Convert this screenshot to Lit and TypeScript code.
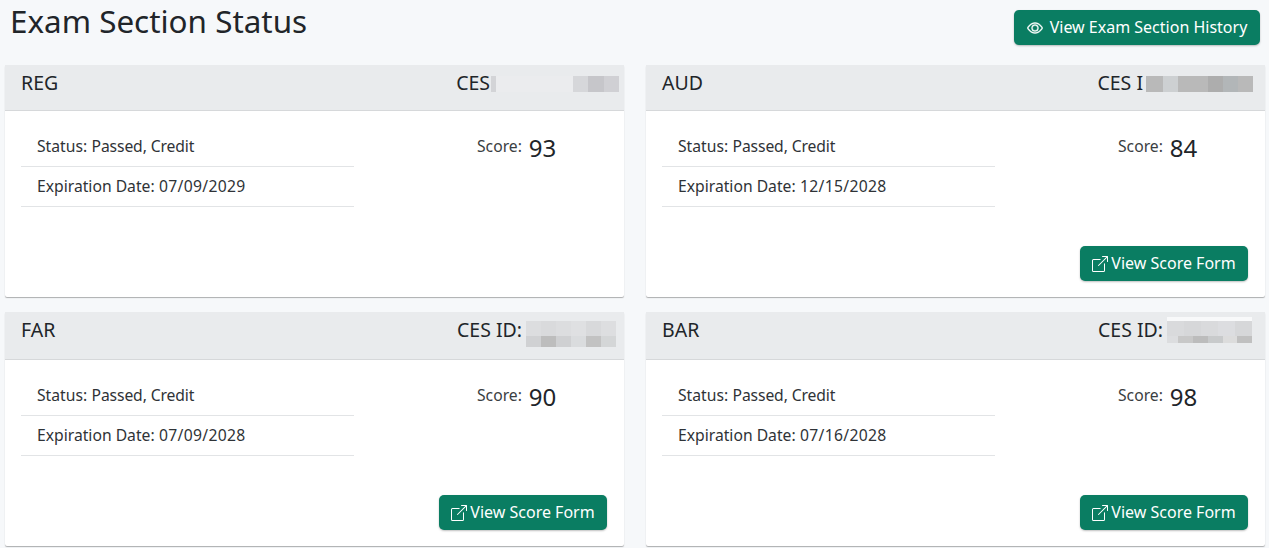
import { LitElement, html, css, svg } from "lit";
import { customElement } from "lit/decorators.js";

type Row = { h: number; cells: [number, string][] };
type Card = {
  name: string; label: string; status: string; date: string; score: string; button: boolean;
  top: number; bottom: number; right: number; gap: number; mosaic: Row[];
};

const cards: Card[] = [
  { name: "REG", label: "CES", status: "Passed, Credit", date: "07/09/2029", score: "93", button: false, top: 11, bottom: 18, right: 0, gap: 1,
    mosaic: [{ h: 16, cells: [[5, "#d3d4d7"], [77, "#ebecee"], [15, "#d6d7da"], [16, "#c6c6ca"], [15, "#d0d0d4"]] }] },
  { name: "AUD", label: "CES I", status: "Passed, Credit", date: "12/15/2028", score: "84", button: true, top: 11, bottom: 18, right: 7, gap: 3,
    mosaic: [{ h: 16, cells: [[17, "#b9b9b9"], [15, "#cdd0d2"], [30, "#b9b9b9"], [15, "#adadad"], [15, "#b2b6b8"], [15, "#b9b9b9"]] }] },
  { name: "FAR", label: "CES ID:", status: "Passed, Credit", date: "07/09/2028", score: "90", button: true, top: 9, bottom: 12, right: 3, gap: 4,
    mosaic: [
      { h: 15, cells: [[15, "#dcdddf"], [15, "#d9dadc"], [15, "#dcdddf"], [15, "#dfe0e2"], [15, "#d8d9db"], [15, "#dddee0"]] },
      { h: 11, cells: [[15, "#d0d1d3"], [15, "#bdbdbd"], [15, "#cfd0d2"], [15, "#dadcde"], [15, "#c2c2c2"], [15, "#d4d6d7"]] },
    ] },
  { name: "BAR", label: "CES ID:", status: "Passed, Credit", date: "07/16/2028", score: "98", button: true, top: 5, bottom: 16, right: 8, gap: 4,
    mosaic: [
      { h: 4, cells: [[85, "#f8f9fa"]] },
      { h: 15, cells: [[17, "#d9dadc"], [17, "#d6d7d9"], [17, "#d9dadc"], [17, "#dcdde0"], [17, "#d6d7d9"]] },
      { h: 7, cells: [[11, "#dcdddf"], [15, "#c8c8c8"], [15, "#bcbcbc"], [15, "#c8cacb"], [14, "#dcdcdc"], [15, "#c0c0c0"]] },
    ] },
];

const eye = svg`<path d="M16 8s-3-5.5-8-5.5S0 8 0 8s3 5.5 8 5.5S16 8 16 8zM1.173 8a13.133 13.133 0 0 1 1.66-2.043C4.12 4.668 5.88 3.5 8 3.5c2.12 0 3.879 1.168 5.168 2.457A13.133 13.133 0 0 1 14.828 8c-.058.087-.122.183-.195.288-.335.48-.83 1.12-1.465 1.755C11.879 11.332 10.119 12.5 8 12.5c-2.12 0-3.879-1.168-5.168-2.457A13.134 13.134 0 0 1 1.172 8z"/><path d="M8 5.5a2.5 2.5 0 1 0 0 5 2.5 2.5 0 0 0 0-5zM4.5 8a3.5 3.5 0 1 1 7 0 3.5 3.5 0 0 1-7 0z"/>`;
const ext = svg`<path d="M8.636 3.5a.5.5 0 0 0-.5-.5H1.5A1.5 1.5 0 0 0 0 4.5v10A1.5 1.5 0 0 0 1.5 16h10a1.5 1.5 0 0 0 1.5-1.5V7.864a.5.5 0 0 0-1 0V14.5a.5.5 0 0 1-.5.5h-10a.5.5 0 0 1-.5-.5v-10a.5.5 0 0 1 .5-.5h6.636a.5.5 0 0 0 .5-.5z"/><path d="M16 .5a.5.5 0 0 0-.5-.5h-5a.5.5 0 0 0 0 1h3.793L6.146 9.146a.5.5 0 1 0 .708.708L15 1.707V5.5a.5.5 0 0 0 1 0v-5z"/>`;

@customElement("app-root")
export class AppRoot extends LitElement {
  static styles = css`
    :host { display: block; width: 1269px; height: 548px; overflow: hidden; background: #f6f8fa; color: #212529;
      font-family: "Noto Sans", "Open Sans", sans-serif; }
    .top { display: flex; justify-content: space-between; align-items: flex-start; height: 65px; padding: 0 9px 0 10px; box-sizing: border-box; }
    h1 { margin: 0; font-size: 31.4px; font-weight: 400; line-height: 41px; }
    .btn { display: inline-flex; align-items: center; background: #0a7d62; color: #fff; border: 0; border-radius: 5px;
      font: inherit; font-size: 16px; box-shadow: 0 1px 2px rgba(0,0,0,.25); padding: 0 0 2px; }
    .history { margin-top: 10px; height: 35px; width: 246px; justify-content: center; gap: 7px; }
    .history svg { stroke: currentColor; stroke-width: .4; }
    .form { height: 35px; width: 168px; justify-content: center; gap: 3px; }
    .btn svg { fill: currentColor; margin-top: 2px; }
    .grid { display: grid; grid-template-columns: 619px 619px; grid-template-rows: 232px 234px; column-gap: 22px; row-gap: 15px; padding: 0 4px 0 5px; }
    .card { background: #fff; display: flex; flex-direction: column; box-shadow: 0 1px 1px rgba(0,0,0,.3); border-radius: 2px; }
    .head { display: flex; justify-content: space-between; align-items: flex-start; padding: 0 5px 0 16px; background: #e9ebed;
      border-bottom: 1px solid #d6d8da; font-size: 19.5px; line-height: 36px; }
    .ces { display: flex; align-items: flex-start; }
    .mosaic { display: flex; flex-direction: column; }
    .mrow { display: flex; }
    .body { flex: 1; display: flex; flex-direction: column; padding: 16px 17px 16px 16px; }
    .main { display: flex; }
    .list { width: 333px; font-size: 15.7px; }
    .item { height: 40px; box-sizing: border-box; padding: 0 0 2px 16px; display: flex; align-items: center; gap: .28em; border-bottom: 1px solid #e2e4e6; color: #2f3337; }
    .status { letter-spacing: -.12px; }
    .date { letter-spacing: .3px; }
    .score { margin-left: 123px; display: flex; align-items: flex-start; gap: 7px; font-size: 15.7px; color: #3a3e42; }
    .score span { line-height: 38px; }
    .score b { font-weight: 400; font-size: 24px; line-height: 42px; color: #212529; }
    .foot { margin-top: auto; display: flex; justify-content: flex-end; }
  `;

  render() {
    return html`
      <div class="top">
        <h1>Exam Section Status</h1>
        <button class="btn history"><svg width="16" height="16" viewBox="0 0 16 16">${eye}</svg>View Exam Section History</button>
      </div>
      <div class="grid">
        ${cards.map((c) => html`
          <section class="card">
            <div class="head">
              <span>${c.name}</span>
              <div class="ces" style="margin-right:${c.right}px">
                <span>${c.label}</span>
                <div class="mosaic" style="margin:${c.top}px 0 ${c.bottom}px ${c.gap}px">
                  ${c.mosaic.map((r) => html`<div class="mrow">${r.cells.map(([w, col]) => html`<i style="width:${w}px;height:${r.h}px;background:${col}"></i>`)}</div>`)}
                </div>
              </div>
            </div>
            <div class="body">
              <div class="main">
                <div class="list">
                  <div class="item"><span>Status:</span><span class="status">${c.status}</span></div>
                  <div class="item"><span>Expiration Date:</span><span class="date">${c.date}</span></div>
                </div>
                <div class="score"><span>Score:</span><b>${c.score}</b></div>
              </div>
              ${c.button ? html`<div class="foot"><button class="btn form"><svg width="16" height="16" viewBox="0 0 16 16">${ext}</svg>View Score Form</button></div>` : ""}
            </div>
          </section>`)}
      </div>
    `;
  }
}
